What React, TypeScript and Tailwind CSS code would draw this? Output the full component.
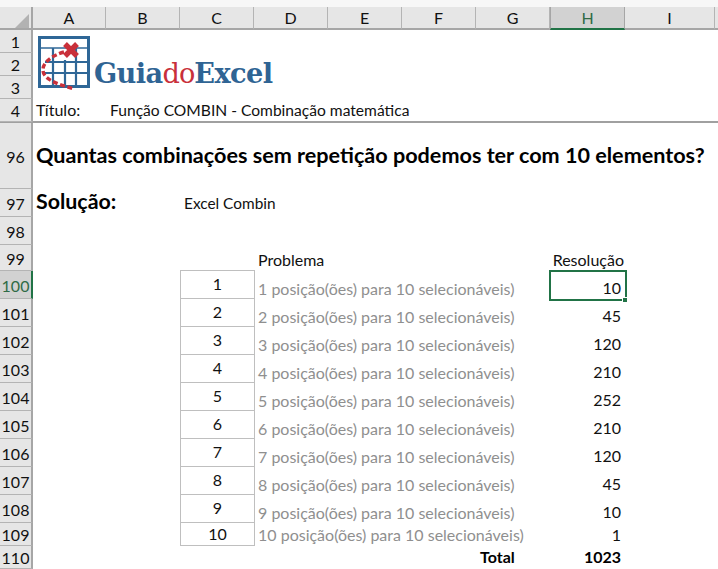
const columns = ['A', 'B', 'C', 'D', 'E', 'F', 'G', 'H', 'I'];

const gridCols = 'grid grid-cols-[33px_73px_74px_74px_74px_74px_74px_74px_75px_90px_1fr]';

const rowHead = (selected: boolean) =>
  selected
    ? 'flex items-center justify-center pt-[2px] bg-[#d2d2d2] text-[#2f6b46] border-r-2 border-r-[#217346] border-b border-b-[#b4b4b4]'
    : 'flex items-center justify-center pt-[2px] bg-[#e6e6e6] text-[#111] border-r-2 border-r-[#a6a6a6] border-b border-b-[#b4b4b4]';

function Row({ label, height, selected = false, children }: { label: string; height: string; selected?: boolean; children?: React.ReactNode }) {
  return (
    <div className={`${gridCols} ${height}`}>
      <div className={rowHead(selected)}>{label}</div>
      {children}
    </div>
  );
}

function Logo() {
  return (
    <div className="absolute left-[37px] top-[35px] flex items-end">
      <svg width="54" height="56" viewBox="37 35 54 56" fill="none">
        <rect x="39.5" y="37.5" width="49" height="49" stroke="#2f6797" strokeWidth="3" />
        <path d="M40 48H88" stroke="#2f6797" strokeWidth="2" opacity="0.75" />
        <path d="M45 62H88M45 73H88M53 48V85M65 60V85M76 48V85" stroke="#2f6797" strokeWidth="2.2" />
        <path d="M64 52C50 56 42 64 43 71C44 80 60 85 73 88.5" stroke="#c9303a" strokeWidth="3.4" strokeDasharray="5 2.6" />
        <path d="M65 44L77 56M77 44L65 56" stroke="#c9303a" strokeWidth="5.4" />
      </svg>
      <div className="ml-[3px] mb-[1px] font-['DejaVu_Serif',serif] text-[27.2px] leading-[32px] font-bold tracking-[-0.6px] text-[#2f6494] whitespace-nowrap">
        Guia<span className="font-normal text-[#c9303a] tracking-[-1px]">do</span>Excel
      </div>
    </div>
  );
}

function Problem({ n, value, height, short = false }: { n: number; value: number; height: string; short?: boolean }) {
  return (
    <Row label={String(99 + n)} height={height} selected={n === 1}>
      <div />
      <div />
      <div className="flex items-center justify-center border border-[#bfbfbf] -mt-px -mr-px pb-[1px] text-[#111]">{n}</div>
      <div className={`col-span-4 pl-[4px] whitespace-nowrap text-[#8f8f8f] self-end ${short ? 'pb-[1px]' : 'pb-[0px]'}`}>
        {n} posição(ões) para 10 selecionáveis)
      </div>
      <div className="text-right pr-[4px] self-end pb-[1px] text-[#111]">{value}</div>
    </Row>
  );
}

const results = [10, 45, 120, 210, 252, 210, 120, 45, 10];

export default function App() {
  return (
    <div className="relative w-[718px] h-[569px] overflow-hidden bg-white font-['Lato',sans-serif] text-[16px] leading-[20px] text-[#111]">
      <div className="h-[7px] bg-[#f7f7f7]" />
      <div className={`${gridCols} h-[23px]`}>
        <div className="relative bg-[#e6e6e6] border-r-2 border-r-[#a6a6a6] border-b-2 border-b-[#a6a6a6]">
          <svg className="absolute left-[15px] top-[7px]" width="14" height="14" viewBox="0 0 14 14">
            <polygon points="14,0 14,14 0,14" fill="#b2b2b2" />
          </svg>
        </div>
        {columns.map((c) => (
          <div
            key={c}
            className={
              c === 'H'
                ? 'flex items-center justify-center bg-[#d2d2d2] text-[#2f6b46] border-b-2 border-b-[#217346] border-l border-l-[#a6a6a6] border-r border-r-[#a6a6a6]'
                : 'flex items-center justify-center bg-[#e6e6e6] border-b-2 border-b-[#a6a6a6] border-r border-r-[#b4b4b4]'
            }
          >
            {c}
          </div>
        ))}
        <div className="bg-[#e6e6e6] border-b-2 border-b-[#a6a6a6]" />
      </div>

      <Row label="1" height="h-[23px]" />
      <Row label="2" height="h-[23px]" />
      <Row label="3" height="h-[23px]" />
      <div className="border-b-2 border-b-[#a0a0a0]">
        <Row label="4" height="h-[22px]">
          <div className="pl-[3px] pt-[1px] whitespace-nowrap">Título:</div>
          <div className="col-span-5 pl-[4px] pt-[1px] text-[15.6px] whitespace-nowrap">Função COMBIN - Combinação matemática</div>
        </Row>
      </div>

      <Row label="96" height="h-[66px]">
        <div className="col-span-9 pl-[3px] self-end pb-[21px] whitespace-nowrap text-[21.6px] leading-[26px] font-bold text-black">
          Quantas combinações sem repetição podemos ter com 10 elementos?
        </div>
      </Row>
      <Row label="97" height="h-[28px]">
        <div className="col-span-2 pl-[3px] text-[21.4px] leading-[24px] font-bold text-black whitespace-nowrap">Solução:</div>
        <div className="pl-[4px] pt-[4px] text-[15.4px] whitespace-nowrap col-span-2">Excel Combin</div>
      </Row>
      <Row label="98" height="h-[28px]" />
      <Row label="99" height="h-[26px]">
        <div />
        <div />
        <div />
        <div className="col-span-3 pl-[4px] pt-[5px]">Problema</div>
        <div />
        <div className="pr-[1px] pt-[5px] text-right whitespace-nowrap">Resolução</div>
      </Row>
      {results.map((value, i) => (
        <Problem key={i} n={i + 1} value={value} height="h-[28px]" />
      ))}
      <Problem n={10} value={1} height="h-[23px]" short />
      <Row label="110" height="h-[23px]">
        <div />
        <div />
        <div />
        <div />
        <div />
        <div />
        <div className="pl-[4px] font-bold text-black pt-[1px]">Total</div>
        <div className="text-right pr-[4px] font-bold text-black pt-[1px]">1023</div>
      </Row>

      <Logo />
      {/* selected cell H100 */}
      <div className="absolute left-[549px] top-[270px] w-[78px] h-[31px] border-2 border-[#217346] pointer-events-none" />
      <div className="absolute left-[622px] top-[297px] w-[6px] h-[6px] bg-[#217346] border border-white" />
    </div>
  );
}
